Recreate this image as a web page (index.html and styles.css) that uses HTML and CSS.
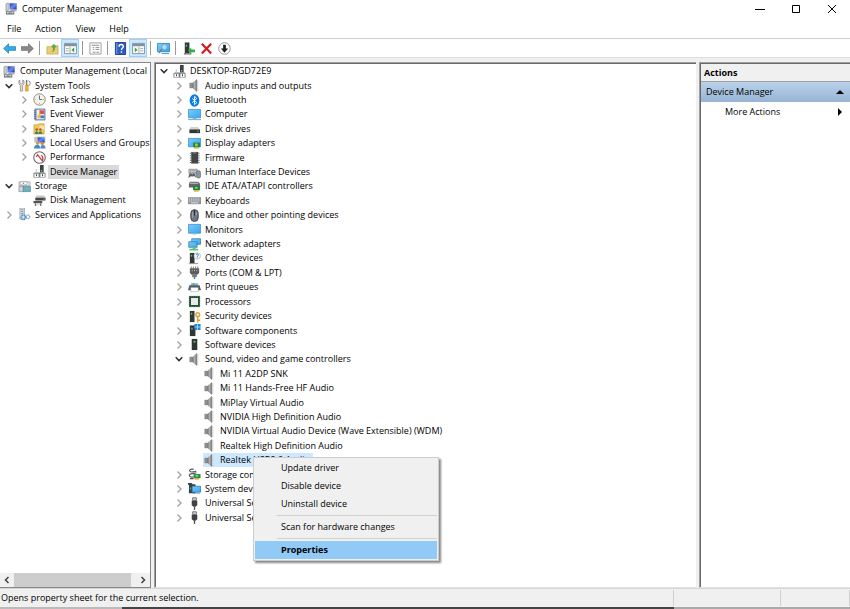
FILE: index.html
```html
<!DOCTYPE html>
<html lang="en">
<head>
<meta charset="utf-8">
<title>Computer Management</title>
<link rel="stylesheet" href="styles.css">
</head>
<body>
<svg class="sprite" aria-hidden="true">
  <defs>
    <linearGradient id="g-blue" x1="0" y1="0" x2="1" y2="1"><stop offset="0" stop-color="#7accfb"/><stop offset="1" stop-color="#38a5f0"/></linearGradient>
    <linearGradient id="g-grey" x1="0" y1="0" x2="1" y2="0"><stop offset="0" stop-color="#6a6a6a"/><stop offset=".6" stop-color="#b5b5b5"/><stop offset="1" stop-color="#777"/></linearGradient>
    <linearGradient id="g-navy" x1="0" y1="0" x2="1" y2="1"><stop offset="0" stop-color="#1c2fa8"/><stop offset=".5" stop-color="#6f8df0"/><stop offset="1" stop-color="#1c2fa8"/></linearGradient>
  </defs>
  <symbol id="right" viewBox="0 0 8 10"><path d="M2.500 1.500L6 5 2.500 8.500" fill="none" stroke="#a0a0a0" stroke-width="1.300"/></symbol>
  <symbol id="down" viewBox="0 0 8 10"><path d="M.7 3.300L4 6.600l3.300-3.300" fill="none" stroke="#303030" stroke-width="1.500"/></symbol>
  <symbol id="mgmt" viewBox="0 0 14 14"><path d="M1 2l3-1v8l-3 1z" fill="#c9ced6" stroke="#7a828c" stroke-width=".6"/><path d="M4 1h9v8H4z" fill="#d8d8d0"/><path d="M5 1.500h7.500V8H5z" fill="url(#g-navy)"/><path d="M6 9h6l1 1H5z" fill="#8d939a"/><path d="M1 10h9v3.500H1z" fill="#68747e"/><path d="M2 11h2v1H2zM5 11h1v1H5zM7 11h2v1H7z" fill="#fff"/></symbol>
  <symbol id="tools" viewBox="0 0 14 14"><path d="M2 1v3l1.500 1.500L5 4V1l1.500 1v3L5 7v6H2.500V7L1 5V2z" fill="#ddd" stroke="#777" stroke-width=".7"/><path d="M8.500 1h1.500v6H8.500z" fill="#777"/><path d="M8 6.500h3V13H8z" fill="#f1b524" stroke="#b27a10" stroke-width=".5"/><path d="M11 2l2 1v3l-2 1" fill="none" stroke="#888"/></symbol>
  <symbol id="clock" viewBox="0 0 14 14"><circle cx="7" cy="7" r="6.200" fill="#f7f3e2" stroke="#85878a"/><path d="M7 3v4h3" fill="none" stroke="#466a9b"/><path d="M7 2v1M7 11v1M2 7h1M11 7h1" stroke="#c8a040"/></symbol>
  <symbol id="event" viewBox="0 0 14 14"><path d="M2 1h11v12H2z" fill="#8aa4cf" stroke="#5873a3" stroke-width=".7"/><path d="M4 2h8v10H4z" fill="#e9eef8"/><path d="M7 2.500h5v4H7z" fill="#e25434"/><path d="M5 8l3-3v6H5z" fill="#f0c232"/><path d="M8 8h4v3H8z" fill="#5477be"/><path d="M1 3h2M1 5h2M1 7h2M1 9h2M1 11h2" stroke="#46577a" stroke-width=".8"/></symbol>
  <symbol id="shared" viewBox="0 0 14 14"><path d="M1 3h4l1-1h6v11H1z" fill="#efc65a" stroke="#c79a2e" stroke-width=".7"/><path d="M7 4h5v4H7z" fill="#f9e7a7"/><circle cx="4" cy="8" r="1.400" fill="#a66032"/><circle cx="8" cy="8" r="1.400" fill="#a66032"/><path d="M2 13c0-4 4-4 4 0zM6 13c0-4 4-4 4 0z" fill="#47884f"/></symbol>
  <symbol id="users" viewBox="0 0 14 14"><path d="M4 .5h9.500V8H4z" fill="#ccd0d6"/><path d="M5 1.500h7.500V7H5z" fill="url(#g-navy)"/><path d="M1.500 1H4v6H1.500z" fill="#b7bcc3"/><circle cx="5" cy="7.500" r="2" fill="#d59a62"/><circle cx="10" cy="8" r="1.800" fill="#c48a50"/><path d="M1 13.500c0-5.500 7-5.500 7 0z" fill="#3b8fc2"/><path d="M8 13.500c0-5 5.500-5 5.500 0z" fill="#5a83c8"/></symbol>
  <symbol id="perf" viewBox="0 0 14 14"><circle cx="7" cy="7" r="6.200" fill="#fff" stroke="#6c6c6c" stroke-width="1.200"/><path d="M3.500 6.500L5 4l5 6.500c1-2 1-4-1-6" fill="none" stroke="#c22f2f" stroke-width="1.300"/></symbol>
  <symbol id="device" viewBox="0 0 14 14"><path d="M7.500 0h4v8h-4z" fill="#3f4346"/><path d="M8.500 5.500H10V7H8.500z" fill="#49d64d"/><path d="M2 8h10.500L13.500 9v4.500H.5V9z" fill="#777b7e"/><path d="M1.500 9.500H6V13H1.500zM8 9.500h4.500V13H8z" fill="#fff"/><path d="M3.200 10h1v2h-1zM9.700 10h1v2h-1z" fill="#333"/><path d="M3.500 4.500v3.500" stroke="#bbb" fill="none"/></symbol>
  <symbol id="storage" viewBox="0 0 14 14"><path d="M1 2h12v4H1z" fill="#e3e6e8" stroke="#999" stroke-width=".7"/><ellipse cx="6" cy="3.500" rx="4" ry="2" fill="#fff" stroke="#999" stroke-width=".7"/><circle cx="6" cy="3.500" r=".8" fill="#777"/><path d="M1 7h5v5.500H1z" fill="#cfd5da" stroke="#808890" stroke-width=".7"/><path d="M5.500 7h8v5.500h-8z" fill="#58b2d4" stroke="#6f7a80" stroke-width=".7"/><path d="M8 8.500h3v2H8z" fill="#65ce74"/></symbol>
  <symbol id="disk" viewBox="0 0 14 14"><path d="M4 1.500h8l1.500 2.500h-11z" fill="#c3c6c8"/><path d="M2.500 4h11v3h-11z" fill="#444"/><path d="M11 5h1.500v1H11z" fill="#4ddd4d"/><path d="M.5 7.500H10V10H.5z" fill="#555"/><path d="M2 10h1.500v3H2zM7.500 10H9v3H7.500z" fill="#777"/><path d="M3.500 10h4v2h-4z" fill="#ddd"/></symbol>
  <symbol id="services" viewBox="0 0 14 14"><path d="M2 0h5v12H2z" fill="#dde3e8" stroke="#8d98a2" stroke-width=".7"/><path d="M3 2h3M3 4h3M3 6h3" stroke="#7f93a6"/><circle cx="6" cy="10" r="2.500" fill="none" stroke="#4f8fc0" stroke-width="1.700" stroke-dasharray="1.500 .6"/><circle cx="10.500" cy="9.500" r="2" fill="none" stroke="#7fabc9" stroke-width="1.500" stroke-dasharray="1 .5"/></symbol>
  <symbol id="sound" viewBox="0 0 14 14"><path d="M2 4.500h2.500v5H2z" fill="#999" stroke="#666" stroke-width=".6"/><path d="M4.500 4.500L9 .5v13L4.500 9.500z" fill="url(#g-grey)"/><path d="M9.200.5v13" stroke="#7b7b7b"/><path d="M10.500 1v12" stroke="#cfcfcf" stroke-width="1.200"/></symbol>
  <symbol id="bt" viewBox="0 0 14 14"><ellipse cx="7" cy="7" rx="5.200" ry="6.700" fill="#087bea"/><path d="M4.500 4.700l5 4.600L7 11.500v-9l2.500 2.200-5 4.600" fill="none" stroke="#fff"/></symbol>
  <symbol id="monitor" viewBox="0 0 14 14"><path d="M.5 1.500h13v9.500H.5z" fill="url(#g-blue)" stroke="#3c8cc0" stroke-width=".8"/><path d="M5 12h4" stroke="#8cc6e8"/></symbol>
  <symbol id="computer" viewBox="0 0 14 14"><path d="M.5 1.500h13v9H.5z" fill="url(#g-blue)" stroke="#3c8cc0" stroke-width=".8"/><path d="M0 12.500h14" stroke="#5fa6d3"/><path d="M5 11.500h4" stroke="#999"/></symbol>
  <symbol id="drive" viewBox="0 0 14 14"><path d="M3 5.500h8L12.500 8h-11z" fill="#cfd1d2"/><path d="M1.500 8h11.500v4H1.500z" fill="#333638"/><path d="M10 9.500h1.500v1H10z" fill="#46d947"/></symbol>
  <symbol id="display" viewBox="0 0 14 14"><path d="M.5 1.500h13v9H.5z" fill="url(#g-blue)" stroke="#3c8cc0" stroke-width=".8"/><path d="M5.500 6H13v5H5.500z" fill="#218447"/><path d="M7.500 7h3v3h-3z" fill="#8fcd65"/><path d="M6.500 11h5v1.500h-5z" fill="#e1aa20"/></symbol>
  <symbol id="firm" viewBox="0 0 14 14"><path d="M3.500 1h7.500v12.500H3.500z" fill="#444"/><path d="M2 2.500h1.500M2 5h1.500M2 7.500h1.500M2 10h1.500M2 12.500h1.500M11 2.500h1.500M11 5h1.500M11 7.500h1.500M11 10h1.500M11 12.500h1.500" stroke="#666"/><path d="M5 2h4" stroke="#999"/></symbol>
  <symbol id="hid" viewBox="0 0 14 14"><path d="M1 3.500h9v5H1z" fill="#c8c8c8" stroke="#888" stroke-width=".8"/><path d="M2 5h7M2 7h7" stroke="#777" stroke-dasharray="1 1"/><path d="M.5 13c0-5.500 3-6 4-3.500 1-2.500 4-2 4 3.500L7 11H3z" fill="#55616c"/><rect x="9" y="5" width="4.500" height="8" rx="2" fill="#8b959d" stroke="#59636e" stroke-width=".7"/><path d="M4 10.500h1v1H4z" fill="#3f91d0"/></symbol>
  <symbol id="ide" viewBox="0 0 14 14"><path d="M2 2h9l2 2v4H1V4z" fill="#62676b"/><path d="M2 3.500h9" stroke="#ccc"/><path d="M5.500 6.500H13V11H5.500z" fill="#23814c"/><path d="M7.500 7.500h3v2h-3z" fill="#89c457"/><path d="M6.500 11h5v1.500h-5z" fill="#dba822"/></symbol>
  <symbol id="keyboard" viewBox="0 0 14 14"><path d="M0 3.500h14V11H0z" fill="#8b9298"/><path d="M1 5.500h12M1 7.500h12" stroke="#eef0f1" stroke-dasharray="1.200 .8"/><path d="M3 9.500h8" stroke="#dfe2e4"/></symbol>
  <symbol id="mouse" viewBox="0 0 14 14"><rect x="3" y=".7" width="8" height="12.700" rx="4" fill="#6d7680" stroke="#3a424b"/><path d="M7 1v6" stroke="#222a31"/><path d="M5 3.500v6M9 3.500v3" stroke="#a6b0b8"/></symbol>
  <symbol id="network" viewBox="0 0 14 14"><path d="M4 .8h9.500v6H4z" fill="url(#g-blue)" stroke="#3278a8" stroke-width=".8"/><path d="M.8 4h9v6h-9z" fill="url(#g-blue)" stroke="#3278a8" stroke-width=".8"/><path d="M5 10.500h3v1h3v2H1.500v-2H5z" fill="#62c46e"/></symbol>
  <symbol id="other" viewBox="0 0 14 14"><path d="M2 1h5v11H2z" fill="#333638"/><path d="M3 3h1.500v2H3z" fill="#42d852"/><path d="M1 12.500h10" stroke="#888"/><circle cx="10" cy="4.200" r="3.500" fill="#f3f8fc" stroke="#aeb9c0" stroke-width=".8"/><path d="M8.800 3.200c0-1.500 2.500-1.500 2.500 0 0 1-1.300.8-1.300 2M10 6v.7" fill="none" stroke="#277abf"/></symbol>
  <symbol id="port" viewBox="0 0 14 14"><path d="M2 2.500h10v5l-2 2H4l-2-2z" fill="#5c5c5c"/><path d="M3.500.5v2M5.800.5v2M8.200.5v2M10.500.5v2" stroke="#777"/><path d="M4 5h1M6.500 5h1M9 5h1" stroke="#ddd"/><path d="M4.500 9.500h5V12h-5z" fill="#777"/><path d="M7 12v2" stroke="#666" stroke-width="1.500"/></symbol>
  <symbol id="printer" viewBox="0 0 14 14"><path d="M3 2.500h8V5H3z" fill="#6bb5e4"/><path d="M1.500 4.500h11L14 10H0z" fill="#555c61"/><path d="M3 7h8v4.500H3z" fill="#fff" stroke="#999" stroke-width=".5"/><path d="M5 2.500h2v1.500H5z" fill="#46a84d"/></symbol>
  <symbol id="cpu" viewBox="0 0 14 14"><path d="M1 1h12v12H1z" fill="#1f5339"/><path d="M1.500 1.500h11v11h-11z" fill="none" stroke="#8ca489" stroke-dasharray="1 1" stroke-width=".6"/><path d="M3.200 3.200h7.600v7.600H3.200z" fill="#e9ebe4"/></symbol>
  <symbol id="security" viewBox="0 0 14 14"><path d="M2 1h5v12H2z" fill="#333638"/><path d="M3 3h1.500v2H3z" fill="#42d852"/><circle cx="10.500" cy="5" r="2" fill="none" stroke="#d9a53a" stroke-width="1.600"/><path d="M10.500 7v6.500M11 11h2" stroke="#d99c24" stroke-width="1.500"/></symbol>
  <symbol id="swcomp" viewBox="0 0 14 14"><path d="M2 1.500h6V13H2z" fill="#333638"/><path d="M3.500 4H5v2H3.500z" fill="#42d852"/><path d="M7 0h6.500v6.500H7z" fill="#1c86d8"/><path d="M10.200 0v6.500M7 3.200h6.500" stroke="#cbeaff" stroke-width=".8"/></symbol>
  <symbol id="swdev" viewBox="0 0 14 14"><path d="M4 1h6v12H4z" fill="#303335"/><path d="M6 3h2v2H6z" fill="#42d852"/></symbol>
  <symbol id="storctl" viewBox="0 0 14 14"><path d="M6 1.500C3 .5 1 2 2 3.500s6 .5 7-.5M9 5C7 7 2 5 1.500 7.500S5 10 6 9.500M2 11.500h4" fill="none" stroke="#555" stroke-width="1.200"/><path d="M6 6.500h7.500V11H6z" fill="#28894f"/><path d="M8 7.500h3v2H8z" fill="#8ac65b"/><path d="M7 11h5v1.500H7z" fill="#dba822"/></symbol>
  <symbol id="system" viewBox="0 0 14 14"><path d="M0 1h4l1 1.500h3V12H1V3H0z" fill="#34424c"/><path d="M4.500 4.500h9V11h-9z" fill="url(#g-blue)" stroke="#2878ae" stroke-width=".8"/><path d="M5 12.500h8" stroke="#8fa0aa" stroke-width=".8"/><path d="M2 6h1v2H2z" fill="#42d852"/></symbol>
  <symbol id="usb" viewBox="0 0 14 14"><path d="M5 .8h4v3H5z" fill="#ccc" stroke="#555" stroke-width=".8"/><path d="M4 4h6v5l-2 1.500H6L4 9z" fill="#3f4245"/><path d="M7 10v4" stroke="#555" stroke-width="1.400"/></symbol>
  <symbol id="back" viewBox="0 0 14 14"><path d="M.7 7L6 2v3h7.500v4H6v3z" fill="#35aee8" stroke="#1f79ad" stroke-width=".8"/></symbol>
  <symbol id="fwd" viewBox="0 0 14 14"><path d="M13.300 7L8 2v3H.5v4H8v3z" fill="#8b8b8b" stroke="#676767" stroke-width=".8"/></symbol>
  <symbol id="up" viewBox="0 0 14 14"><path d="M1 5h4l1-1h7v9H1z" fill="#efcb78" stroke="#cfa44c" stroke-width=".8"/><path d="M4 11c4 0 3.500-3 3.500-5H5.500L8.500 2l3 4H9.500c0 3 0 5-5.500 5z" fill="#49b04b"/></symbol>
  <symbol id="pane-left" viewBox="0 0 14 14"><path d="M.5 1.500h13v11H.5z" fill="#f8f9fa" stroke="#84929c"/><path d="M1 2h12v2.500H1z" fill="#80909c"/><path d="M6.500 5v7M2 7h3M2 9.500h3" stroke="#a0a9b0"/><path d="M8 8.500L11 6v5z" fill="#36a13f"/></symbol>
  <symbol id="pane-right" viewBox="0 0 14 14"><path d="M.5 1.500h13v11H.5z" fill="#f8f9fa" stroke="#84929c"/><path d="M1 2h12v2.500H1z" fill="#80909c"/><path d="M7.500 5v7M9 7h3M9 9.500h3" stroke="#a0a9b0"/><path d="M6 8.500L3 6v5z" fill="#36a13f"/></symbol>
  <symbol id="props" viewBox="0 0 14 14"><path d="M1 1h12v12H1z" fill="#fff" stroke="#999"/><path d="M3 3.500h8M4 6h1.500M7 6h4M4 8h1.500M7 8h4M4 11h3M8 11h3" stroke="#888"/></symbol>
  <symbol id="help" viewBox="0 0 14 14"><path d="M1.500.5h11v13h-11z" fill="#2c5bc2" stroke="#1d3c89"/><path d="M3 1v12" stroke="#87a4e2"/><path d="M5.500 5c0-3 4.500-3 4.500 0 0 1.500-2 1.500-2 3.500M8 10v1.500" fill="none" stroke="#fff" stroke-width="1.500"/></symbol>
  <symbol id="scan" viewBox="0 0 14 14"><path d="M.5 1.500h13v9H.5z" fill="url(#g-blue)" stroke="#2878ae" stroke-width=".8"/><circle cx="8" cy="5.500" r="3" fill="#a9dff8" stroke="#5f9cc0" stroke-width=".8"/><path d="M5.500 7.500L2 12" stroke="#6c7f8b" stroke-width="1.300"/><path d="M5 12.500h8" stroke="#3e94bb"/></symbol>
  <symbol id="update" viewBox="0 0 14 14"><path d="M3 .5h5V12H3z" fill="#34393c"/><path d="M4 3h1.500v2H4z" fill="#42d852"/><path d="M2 12h8v1.500H2z" fill="#777"/><path d="M6.500 9.500L10 6v2h4v3h-4v2z" fill="#31b045"/></symbol>
  <symbol id="remove" viewBox="0 0 14 14"><path d="M2 2l10 10.500M12 2L2 12.500" stroke="#d61921" stroke-width="2.300"/></symbol>
  <symbol id="disable" viewBox="0 0 14 14"><circle cx="7" cy="7" r="6.200" fill="#fff" stroke="#777" stroke-width=".8"/><path d="M5.500 3h3v4H11l-4 4.500L3 7h2.500z" fill="#222"/></symbol>
</svg>

<div class="window">
  <header class="titlebar">
    <svg class="icon"><use href="#mgmt"/></svg>
    <h1>Computer Management</h1>
    <div class="caption">
      <button aria-label="Minimize"><svg viewBox="0 0 10 10"><path d="M0 5.500h10" stroke="#000"/></svg></button>
      <button aria-label="Maximize"><svg viewBox="0 0 10 10"><path d="M1.500 1.500h7v7h-7z" fill="none" stroke="#000"/></svg></button>
      <button aria-label="Close"><svg viewBox="0 0 10 10"><path d="M1 1l8 8M9 1L1 9" stroke="#000"/></svg></button>
    </div>
  </header>
  <nav class="menubar"><button>File</button><button>Action</button><button>View</button><button>Help</button></nav>
  <div class="toolbar">
    <button aria-label="Back"><svg class="icon"><use href="#back"/></svg></button>
    <button aria-label="Forward"><svg class="icon"><use href="#fwd"/></svg></button>
    <i></i>
    <button aria-label="Up"><svg class="icon"><use href="#up"/></svg></button>
    <button class="on" aria-label="Console tree"><svg class="icon"><use href="#pane-left"/></svg></button>
    <i></i>
    <button aria-label="Properties"><svg class="icon"><use href="#props"/></svg></button>
    <i></i>
    <button aria-label="Help"><svg class="icon"><use href="#help"/></svg></button>
    <button class="on" aria-label="Action pane"><svg class="icon"><use href="#pane-right"/></svg></button>
    <i></i>
    <button aria-label="Scan"><svg class="icon"><use href="#scan"/></svg></button>
    <i></i>
    <button aria-label="Update"><svg class="icon"><use href="#update"/></svg></button>
    <button aria-label="Uninstall"><svg class="icon"><use href="#remove"/></svg></button>
    <button aria-label="Disable"><svg class="icon"><use href="#disable"/></svg></button>
  </div>

  <main class="panes">
    <nav class="console">
      <ul class="tree">
        <li class="root"><span class="item"><svg class="icon"><use href="#mgmt"/></svg>Computer Management (Local</span></li>
        <li><svg class="chev"><use href="#down"/></svg><span class="item"><svg class="icon"><use href="#tools"/></svg>System Tools</span></li>
        <li class="sub"><svg class="chev"><use href="#right"/></svg><span class="item"><svg class="icon"><use href="#clock"/></svg>Task Scheduler</span></li>
        <li class="sub"><svg class="chev"><use href="#right"/></svg><span class="item"><svg class="icon"><use href="#event"/></svg>Event Viewer</span></li>
        <li class="sub"><svg class="chev"><use href="#right"/></svg><span class="item"><svg class="icon"><use href="#shared"/></svg>Shared Folders</span></li>
        <li class="sub"><svg class="chev"><use href="#right"/></svg><span class="item"><svg class="icon"><use href="#users"/></svg>Local Users and Groups</span></li>
        <li class="sub"><svg class="chev"><use href="#right"/></svg><span class="item"><svg class="icon"><use href="#perf"/></svg>Performance</span></li>
        <li class="sub"><span class="chev"></span><span class="item"><svg class="icon"><use href="#device"/></svg><span class="current">Device Manager</span></span></li>
        <li><svg class="chev"><use href="#down"/></svg><span class="item"><svg class="icon"><use href="#storage"/></svg>Storage</span></li>
        <li class="sub"><span class="chev"></span><span class="item"><svg class="icon"><use href="#disk"/></svg>Disk Management</span></li>
        <li><svg class="chev"><use href="#right"/></svg><span class="item"><svg class="icon"><use href="#services"/></svg>Services and Applications</span></li>
      </ul>
      <div class="scrollbar">
        <button aria-label="Scroll left"><svg viewBox="0 0 8 8"><path d="M5.500 1l-3 3 3 3" fill="none" stroke="#404040" stroke-width="1.500"/></svg></button>
        <div class="thumb"></div>
        <button aria-label="Scroll right"><svg viewBox="0 0 8 8"><path d="M2.500 1l3 3-3 3" fill="none" stroke="#404040" stroke-width="1.500"/></svg></button>
      </div>
    </nav>

    <section class="devices">
      <ul class="tree">
        <li><svg class="chev"><use href="#down"/></svg><span class="item"><svg class="icon"><use href="#device"/></svg>DESKTOP-RGD72E9</span></li>
        <li class="sub"><svg class="chev"><use href="#right"/></svg><span class="item"><svg class="icon"><use href="#sound"/></svg>Audio inputs and outputs</span></li>
        <li class="sub"><svg class="chev"><use href="#right"/></svg><span class="item"><svg class="icon"><use href="#bt"/></svg>Bluetooth</span></li>
        <li class="sub"><svg class="chev"><use href="#right"/></svg><span class="item"><svg class="icon"><use href="#computer"/></svg>Computer</span></li>
        <li class="sub"><svg class="chev"><use href="#right"/></svg><span class="item"><svg class="icon"><use href="#drive"/></svg>Disk drives</span></li>
        <li class="sub"><svg class="chev"><use href="#right"/></svg><span class="item"><svg class="icon"><use href="#display"/></svg>Display adapters</span></li>
        <li class="sub"><svg class="chev"><use href="#right"/></svg><span class="item"><svg class="icon"><use href="#firm"/></svg>Firmware</span></li>
        <li class="sub"><svg class="chev"><use href="#right"/></svg><span class="item"><svg class="icon"><use href="#hid"/></svg>Human Interface Devices</span></li>
        <li class="sub"><svg class="chev"><use href="#right"/></svg><span class="item"><svg class="icon"><use href="#ide"/></svg>IDE ATA/ATAPI controllers</span></li>
        <li class="sub"><svg class="chev"><use href="#right"/></svg><span class="item"><svg class="icon"><use href="#keyboard"/></svg>Keyboards</span></li>
        <li class="sub"><svg class="chev"><use href="#right"/></svg><span class="item"><svg class="icon"><use href="#mouse"/></svg>Mice and other pointing devices</span></li>
        <li class="sub"><svg class="chev"><use href="#right"/></svg><span class="item"><svg class="icon"><use href="#monitor"/></svg>Monitors</span></li>
        <li class="sub"><svg class="chev"><use href="#right"/></svg><span class="item"><svg class="icon"><use href="#network"/></svg>Network adapters</span></li>
        <li class="sub"><svg class="chev"><use href="#right"/></svg><span class="item"><svg class="icon"><use href="#other"/></svg>Other devices</span></li>
        <li class="sub"><svg class="chev"><use href="#right"/></svg><span class="item"><svg class="icon"><use href="#port"/></svg>Ports (COM &amp; LPT)</span></li>
        <li class="sub"><svg class="chev"><use href="#right"/></svg><span class="item"><svg class="icon"><use href="#printer"/></svg>Print queues</span></li>
        <li class="sub"><svg class="chev"><use href="#right"/></svg><span class="item"><svg class="icon"><use href="#cpu"/></svg>Processors</span></li>
        <li class="sub"><svg class="chev"><use href="#right"/></svg><span class="item"><svg class="icon"><use href="#security"/></svg>Security devices</span></li>
        <li class="sub"><svg class="chev"><use href="#right"/></svg><span class="item"><svg class="icon"><use href="#swcomp"/></svg>Software components</span></li>
        <li class="sub"><svg class="chev"><use href="#right"/></svg><span class="item"><svg class="icon"><use href="#swdev"/></svg>Software devices</span></li>
        <li class="sub"><svg class="chev"><use href="#down"/></svg><span class="item"><svg class="icon"><use href="#sound"/></svg>Sound, video and game controllers</span></li>
        <li class="leaf"><span class="item"><svg class="icon"><use href="#sound"/></svg>Mi 11 A2DP SNK</span></li>
        <li class="leaf"><span class="item"><svg class="icon"><use href="#sound"/></svg>Mi 11 Hands-Free HF Audio</span></li>
        <li class="leaf"><span class="item"><svg class="icon"><use href="#sound"/></svg>MiPlay Virtual Audio</span></li>
        <li class="leaf"><span class="item"><svg class="icon"><use href="#sound"/></svg>NVIDIA High Definition Audio</span></li>
        <li class="leaf"><span class="item"><svg class="icon"><use href="#sound"/></svg>NVIDIA Virtual Audio Device (Wave Extensible) (WDM)</span></li>
        <li class="leaf"><span class="item"><svg class="icon"><use href="#sound"/></svg>Realtek High Definition Audio</span></li>
        <li class="leaf"><span class="item selected"><svg class="icon"><use href="#sound"/></svg>Realtek USB2.0 Audio</span></li>
        <li class="sub"><svg class="chev"><use href="#right"/></svg><span class="item"><svg class="icon"><use href="#storctl"/></svg>Storage controllers</span></li>
        <li class="sub"><svg class="chev"><use href="#right"/></svg><span class="item"><svg class="icon"><use href="#system"/></svg>System devices</span></li>
        <li class="sub"><svg class="chev"><use href="#right"/></svg><span class="item"><svg class="icon"><use href="#usb"/></svg>Universal Serial</span></li>
        <li class="sub"><svg class="chev"><use href="#right"/></svg><span class="item"><svg class="icon"><use href="#usb"/></svg>Universal Serial</span></li>
      </ul>
      <div class="context" role="menu">
        <button role="menuitem">Update driver</button>
        <button role="menuitem">Disable device</button>
        <button role="menuitem">Uninstall device</button>
        <hr>
        <button role="menuitem">Scan for hardware changes</button>
        <hr>
        <button role="menuitem" class="default">Properties</button>
      </div>
    </section>

    <aside class="actions">
      <h2>Actions</h2>
      <button class="group">Device Manager<svg viewBox="0 0 8 8"><path d="M0 6l4-4 4 4z"/></svg></button>
      <button class="more">More Actions<svg viewBox="0 0 8 8"><path d="M2 0l4 4-4 4z"/></svg></button>
    </aside>
  </main>
  <footer class="status"><span>Opens property sheet for the current selection.</span><span></span><span></span></footer>
  <div class="edge"><span></span><span></span><span></span></div>
</div>
</body>
</html>
```
FILE: styles.css
```css
* { box-sizing: border-box; }
body {
  margin: 0;
  font: 500 9px/14px "Open Sans", "Noto Sans", sans-serif;
  color: #000;
  background: #f0f0f0;
}
button {
  border: 0;
  padding: 0;
  background: none;
  font: inherit;
  color: inherit;
  display: flex;
  align-items: center;
}
h1, h2, ul { margin: 0; padding: 0; font-size: inherit; }
.sprite { position: absolute; width: 0; height: 0; }
.icon { width: 13px; height: 13px; flex: none; }
.window { display: flex; flex-direction: column; height: 100vh; }

.titlebar { display: flex; align-items: center; gap: 4px; height: 17px; padding-left: 5px; background: #fff; }
.titlebar h1 { font-weight: 500; }
.caption { display: flex; margin-left: auto; }
.caption button { width: 36px; height: 17px; justify-content: center; }
.caption svg { width: 10px; height: 10px; }

.menubar { display: flex; gap: 14px; height: 22px; padding: 3px 7px 0; background: #fff; border-bottom: 1px solid #ccc; }

.toolbar { display: flex; align-items: center; height: 19px; background: #fff; border-bottom: 1px solid #ddd; }
.toolbar button { width: 18px; height: 18px; justify-content: center; }
.toolbar .on { background: #cce8ff; border: 1px solid #99d1ff; }
.toolbar i { width: 1px; height: 14px; margin: 0 3px; background: #999; }

.panes { display: flex; flex: 1; min-height: 0; gap: 3px; padding-top: 4px; }
.console, .devices, .actions { background: #fff; }
.console { display: flex; flex-direction: column; width: 151px; padding: 1px 0 0; border: 1px solid #828790; border-left: 0; overflow: hidden; }
.devices, .actions {
  border-top: 1px solid #a0a0a0;
  border-left: 1px solid #a0a0a0;
  border-bottom: 1px solid #e3e3e3;
  box-shadow: inset 1px 1px #696969;
  padding: 1px 0 0 1px;
}
.devices { position: relative; flex: 1; }
.actions { width: 151px; }

.tree { list-style: none; display: grid; grid-auto-rows: 1fr; white-space: nowrap; }
.tree li { display: flex; align-items: center; min-height: 0; }
.chev { width: 8px; height: 10px; flex: none; }
.item { display: flex; align-items: center; gap: 4px; height: 14px; }
.console .tree { height: 158px; padding-left: 3px; }
.console .chev { margin: 0 5px 0 2px; }
.console .sub { padding-left: 15px; }
.current { padding: 0 2px; margin: 0 -2px; background: #d9d9d9; }
.devices .tree { height: 461px; }
.devices .chev { margin: 0 5px 0 4px; }
.devices .sub { padding-left: 15px; }
.devices .leaf { padding-left: 47px; }
.selected { padding-right: 3px; background: #cce8ff; }

.scrollbar { display: flex; height: 14px; margin-top: auto; background: #f0f0f0; }
.scrollbar button { width: 14px; justify-content: center; }
.scrollbar svg { width: 8px; height: 8px; }
.thumb { flex: 1; margin-right: 5px; background: #cdcdcd; }

.context {
  position: absolute;
  left: 98px;
  top: 394px;
  width: 186px;
  padding: 1px;
  background: #f0f0f0;
  border: 1px solid #ccc;
  box-shadow: 2px 2px 2px #888;
}
.context button { width: 100%; height: 18px; padding-left: 26px; }
.context hr { margin: 2px 0 2px 22px; border: 0; height: 1px; background: #d0d0d0; }
.context .default { background: #91c9f7; font-weight: 700; }

.actions h2 { height: 18px; padding: 2px 3px; background: #f0f0f0; border-bottom: 1px solid #a0a0a0; }
.actions button { width: 100%; height: 20px; justify-content: space-between; padding: 0 6px 0 5px; }
.actions svg { width: 8px; height: 8px; }
.actions .group { background: linear-gradient(#b9d1ea, #98b4d4); }
.actions .more { padding-left: 24px; }

.status { display: flex; height: 19px; border-top: 1px solid #d5d5d5; align-items: center; }
.status span { height: 16px; padding: 1px 0 0 1px; border-right: 1px solid #d0d0d0; }
.status span:nth-child(1) { flex: 1; }
.status span:nth-child(2) { width: 107px; }
.status span:nth-child(3) { width: 69px; }
.edge { display: flex; height: 2px; background: #aaa; }
.edge span:nth-child(1) { width: 122px; background: #bbb; }
.edge span:nth-child(2) { flex: 1; background: #444; }
.edge span:nth-child(3) { width: 176px; }
```
